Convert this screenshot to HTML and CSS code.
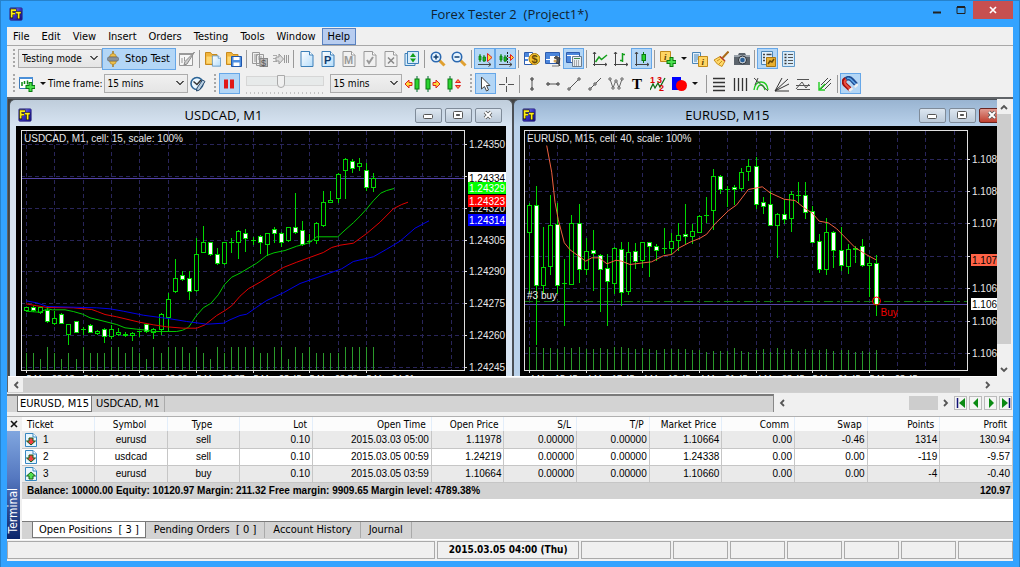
FILE: index.html
```html
<!DOCTYPE html>
<html lang="en">
<head>
    <meta charset="UTF-8">
    <meta name="viewport" content="width=device-width, initial-scale=1.0">
    <title>Forex Tester 2 (Project1*)</title>
    <link rel="stylesheet" href="styles.css">
</head>
<body>
    <!-- shared shapes -->
    <svg class="defs" aria-hidden="true">
        <defs>
            <linearGradient id="gLogo" x1="0" y1="0" x2="1" y2="1"><stop offset="0" stop-color="#a9b4ff"/><stop offset=".5" stop-color="#3a33c8"/><stop offset="1" stop-color="#120a78"/></linearGradient>
            <linearGradient id="gDoc" x1="0" y1="0" x2="1" y2="1"><stop offset="0" stop-color="#fff"/><stop offset="1" stop-color="#b4dcfa"/></linearGradient>
        </defs>
        <symbol id="logo" viewBox="0 0 16 16"><rect x="1" y="1" width="14" height="14" rx="1" fill="url(#gLogo)" stroke="#2a2580"/><path d="M3 13V3.500h5.500M3 7.500h4M8 6.500h6M11 6.500v7" fill="none" stroke="#111" stroke-width="3.400"/><path d="M3 12V3.500h5M3 7.500h4M8 6.500h5.500M11 6.500v6.500" fill="none" stroke="#ffee10" stroke-width="2"/></symbol>
        <symbol id="doc" viewBox="0 0 16 16"><path d="M2 .5h8.500l3.500 3.500v11.500H2z" fill="url(#gDoc)" stroke="#3c7fb8"/><path d="M10.500.5v3.500H14" fill="#fff" stroke="#3c7fb8"/></symbol>
        <symbol id="docgray" viewBox="0 0 16 16"><path d="M2 .5h8.500l3.500 3.500v11.500H2z" fill="#f1f1f1" stroke="#999"/><path d="M10.500.5v3.500H14" fill="#fff" stroke="#999"/></symbol>
        <symbol id="folder" viewBox="0 0 16 16"><path d="M.5 13.500v-12h5l1.500 2h5v10z" fill="#f0b43c" stroke="#c98a1c"/><path d="M1.500 5.500h10v7h-10z" fill="#ffd772"/></symbol>
        <symbol id="candles" viewBox="0 0 16 16"><path d="M3 3v8M7 4v7" stroke="#0a8a12"/><path d="M2 5h2v4H2zM6 6h2.500v4H6z" fill="#18b822" stroke="#0a7a10" stroke-width=".8"/><path d="M1 13.500h13M11.500 11.500l2.500 2-2.500 2" fill="none" stroke="#444"/></symbol>
        <symbol id="axes" viewBox="0 0 16 16"><path d="M2.500 1v14M1 13.500h14M1 3l1.500-2L4 3M13 12l2 1.500-2 1.500" fill="none" stroke="#444"/></symbol>
        <symbol id="candle" viewBox="0 0 6 16"><path d="M3 0v16" stroke="#063"/><rect x="1" y="3" width="4" height="10" fill="#2bd430" stroke="#0a7a10"/></symbol>
        <symbol id="orderdoc" viewBox="0 0 14 16"><path d="M1.500 1.500h7.500l3.500 3.500v9.500h-11z" fill="#e9f6ff" stroke="#3787c0"/><path d="M9 1.500V5h3.500" fill="#fff" stroke="#3787c0"/></symbol>
        <symbol id="sellorder" viewBox="0 0 14 16"><use href="#orderdoc"/><path d="M5 6h4v3h2.500L7 13 2.500 9H5z" fill="#f04040" stroke="#186018"/></symbol>
        <symbol id="buyorder" viewBox="0 0 14 16"><use href="#orderdoc"/><path d="M5 13h4v-3h2.500L7 6l-4.500 4H5z" fill="#50e050" stroke="#186018"/></symbol>
    </svg>

    <div class="window">
        <header class="titlebar">
            <svg class="logo"><use href="#logo"/></svg>
            <h1>Forex Tester 2 &nbsp;(Project1*)</h1>
            <div class="win-buttons">
                <button aria-label="Minimize"><svg width="10" height="10"><path d="M1 7.500h8" stroke="#222" stroke-width="2"/></svg></button>
                <button aria-label="Maximize"><svg width="10" height="10"><path d="M1 2h8v6.500H1z" fill="none" stroke="#222"/><path d="M1 2h8" stroke="#222" stroke-width="2"/></svg></button>
                <button class="close" aria-label="Close"><svg width="8" height="8"><path d="M1 1l6 6M7 1L1 7" stroke="#fff" stroke-width="1.700"/></svg></button>
            </div>
        </header>

        <nav class="menu">
            <button>File</button><button>Edit</button><button>View</button><button>Insert</button><button>Orders</button><button>Testing</button><button>Tools</button><button>Window</button><button class="open">Help</button>
        </nav>

        <div class="toolbar">
            <span class="grip"></span>
            <select class="mode" aria-label="Mode"><option>Testing mode</option></select>
            <button class="stop on">
                <svg class="ico" viewBox="0 0 16 16"><path d="M8 0v16" stroke="#a87a1c" stroke-width="1.500"/><path d="M4.500 6Q5 2.500 8 2.500T11.500 6zM4.500 10q.5 3.500 3.500 3.500t3.500-3.500z" fill="#eec04a" stroke="#a87a1c" stroke-width=".6"/><rect x="2.500" y="6" width="11" height="4" rx="1.500" fill="#8a9299" stroke="#5a6066" stroke-width=".6"/></svg>
                <span>Stop Test</span>
            </button>
            <button class="tool" aria-label="Edit strategy"><svg class="ico" viewBox="0 0 16 16"><path d="M.5 2.500h13v12H.5z" fill="#f6f6f6" stroke="#999"/><path d="M0 3h14" stroke="#999" stroke-width="2"/><path d="M3 7v5M5.500 6v4" stroke="#999"/><path d="M15.500 1L8 13l-3 1 1-3.500z" fill="#ccc" stroke="#888"/></svg></button>
            <span class="sep"></span>
            <button class="tool" aria-label="Open"><svg class="ico" viewBox="0 0 16 16"><use href="#folder"/><use href="#doc" x="6" y="4" width="11" height="12"/></svg></button>
            <button class="tool" aria-label="Save"><svg class="ico" viewBox="0 0 16 16"><use href="#folder"/><path d="M5.500 5.500h10v10h-10z" fill="#4e8fe0" stroke="#1f55a8"/><path d="M7.500 6h6v3h-6zM7.500 11.500h6V15h-6z" fill="#fff"/></svg></button>
            <span class="sep"></span>
            <button class="tool" aria-label="Copy order"><svg class="ico" viewBox="0 0 16 16"><path d="M.5 1.500h7v11h-7zM4.500 3.500h7v11h-7z" fill="#eee" stroke="#999"/><path d="M2 4h4M2 6h2M6 6h4M6 8h3M2 8h2M2 10h2" stroke="#999"/><rect x="8" y="7.500" width="7.500" height="8" fill="#bbb" stroke="#888"/><text x="9" y="15" font-size="9" fill="#555">$</text></svg></button>
            <button class="tool" aria-label="Next tick"><svg class="ico" viewBox="0 0 16 16"><path d="M0 4.500h4M0 7.500h3M0 10.500h4" stroke="#aaa"/><path d="M3 6h3V3l4.500 5L6 13v-3H3z" fill="#ddd" stroke="#999"/><path d="M11.500 4v8M13.500 4v8M15.500 4v8" stroke="#999"/></svg></button>
            <span class="sep"></span>
            <button class="tool" aria-label="New"><svg class="ico"><use href="#doc"/></svg></button>
            <button class="tool" aria-label="Project"><svg class="ico" viewBox="0 0 16 16"><use href="#doc"/><text class="b" x="4" y="13" font-size="11" fill="#123e70">P</text></svg></button>
            <button class="tool" aria-label="Market order"><svg class="ico" viewBox="0 0 16 16"><use href="#docgray"/><text class="b" x="3" y="13" font-size="11" fill="#999">M</text></svg></button>
            <button class="tool" aria-label="Confirm order"><svg class="ico" viewBox="0 0 16 16"><use href="#docgray"/><path d="M5 9l2 3 4-6" fill="none" stroke="#999" stroke-width="2"/></svg></button>
            <button class="tool" aria-label="Delete order"><svg class="ico" viewBox="0 0 16 16"><use href="#docgray"/><path d="M5 6.500l6 6M11 6.500l-6 6" stroke="#888" stroke-width="1.500"/></svg></button>
            <button class="tool" aria-label="Modify order"><svg class="ico" viewBox="0 0 16 16"><path d="M1 2.500h10v12H1z" fill="#d8ecfa" stroke="#3c7fb8"/><path d="M3.500.5h11v12h-11z" fill="#d8ecfa" stroke="#3c7fb8"/><path d="M9 2L12 6H6zM9 11.500L12 7.500H6z" fill="#13a01b"/></svg></button>
            <span class="sep"></span>
            <button class="tool" aria-label="Zoom in"><svg class="ico" viewBox="0 0 16 16"><path d="M9 9l5.500 5.500" stroke="#e0a030" stroke-width="3"/><circle cx="6" cy="6" r="4.700" fill="#e8f5ff" stroke="#2a68b0" stroke-width="1.600"/><path d="M3.500 6h5M6 3.500v5" stroke="#123e70" stroke-width="1.500"/></svg></button>
            <button class="tool" aria-label="Zoom out"><svg class="ico" viewBox="0 0 16 16"><path d="M9 9l5.500 5.500" stroke="#e0a030" stroke-width="3"/><circle cx="6" cy="6" r="4.700" fill="#e8f5ff" stroke="#2a68b0" stroke-width="1.600"/><path d="M3.500 6h5" stroke="#123e70" stroke-width="1.500"/></svg></button>
            <span class="sep"></span>
            <button class="tool on" aria-label="Auto scroll"><svg class="ico" viewBox="0 0 16 16"><use href="#candles"/><path d="M10.500 2.500L15 6.500l-4.500 4z" fill="#ffd83a" stroke="#e02020"/></svg></button>
            <button class="tool on" aria-label="Chart shift"><svg class="ico" viewBox="0 0 16 16"><use href="#candles"/><path d="M9.500 1v12" stroke="#222" stroke-dasharray="2 1"/><path d="M10.500 6.500h2M15.500 6.500L12.500 3.500v6z" fill="#ffd83a" stroke="#e02020"/></svg></button>
            <span class="sep"></span>
            <button class="tool" aria-label="Account"><svg class="ico" viewBox="0 0 16 16"><path d="M.5 1.500h8v12h-8z" fill="#fff" stroke="#2d5cae"/><path d="M1 2h4v4H1zM1 8h3v2H1z" fill="#4b86dc"/><circle cx="10.500" cy="8" r="5.500" fill="#f5c532" stroke="#a87a10"/><text class="b" x="7.500" y="12" font-size="11" fill="#6b4a05">$</text></svg></button>
            <button class="tool" aria-label="Statistics"><svg class="ico" viewBox="0 0 16 16"><path d="M.5 1.500h14v11H.5z" fill="#fff" stroke="#2d5cae"/><path d="M1 2h13v3H1zM1 5h4v7H1z" fill="#4b86dc"/><path d="M1 8.500h6" stroke="#fff"/><path d="M7 15h7v-2l-3-1 1-4-3-1 2-2 4 2-1 6 1 2" fill="#555" stroke="#222" stroke-width=".6"/><circle cx="10" cy="10" r="1.500" fill="#d8a85a"/></svg></button>
            <button class="tool on" aria-label="Terminal"><svg class="ico" viewBox="0 0 16 16"><path d="M.5 1.500h13v10H.5z" fill="#fff" stroke="#2d5cae"/><path d="M1 2h12v2H1zM1 5h4v6H1z" fill="#4b86dc"/><path d="M6.500 5.500h9v10h-9z" fill="#e9eef2" stroke="#6c7c8c"/><path d="M8 7.500h6" stroke="#3b8a48"/><path d="M8 10h6M8 12h6M8 14h6" stroke="#666" stroke-dasharray="1 1"/></svg></button>
            <span class="sep"></span>
            <button class="tool" aria-label="Line chart"><svg class="ico" viewBox="0 0 16 16"><use href="#axes"/><path d="M3.500 11L7 6l2.500 2.500L15 4" fill="none" stroke="#14a01c" stroke-width="1.500"/></svg></button>
            <button class="tool" aria-label="Bar chart"><svg class="ico" viewBox="0 0 16 16"><use href="#axes"/><path d="M9.500 2v9M9.500 3.500H12M9.500 9.500H7" fill="none" stroke="#14a01c" stroke-width="1.500"/></svg></button>
            <button class="tool on" aria-label="Candle chart"><svg class="ico" viewBox="0 0 16 16"><use href="#axes"/><path d="M9.500 1v11" stroke="#0a7a10"/><rect x="8" y="3.500" width="3.500" height="6" fill="#2bd430" stroke="#0a7a10"/></svg></button>
            <span class="sep"></span>
            <button class="tool" aria-label="Add indicator"><svg class="ico" viewBox="0 0 16 16"><path d="M.5.5h10v10H.5z" fill="#ffd564" stroke="#c08a1c"/><text class="i" x="4" y="9" font-size="9" fill="#5a3c00">i</text><path d="M11.500 6v10M6.500 11h10" stroke="#0a7a10" stroke-width="4"/><path d="M11.500 7v8M7.500 11h8" stroke="#4be04f" stroke-width="2"/></svg></button>
            <button class="drop" aria-label="More indicators"></button>
            <button class="tool" aria-label="Indicators"><svg class="ico" viewBox="0 0 16 16"><path d="M.5 1.500h8v11h-8z" fill="#e2f0fb" stroke="#4a86b8"/><path d="M2 4h5M2 6h5M2 8h5M2 10h3" stroke="#4a86b8"/><path d="M6.500 5.500h9v10h-9z" fill="#ffd564" stroke="#c08a1c"/><text class="i" x="9.500" y="14" font-size="9" fill="#5a3c00">i</text></svg></button>
            <button class="tool" aria-label="Clear"><svg class="ico" viewBox="0 0 16 16"><path d="M15.500.5L9.500 7" stroke="#a86a18" stroke-width="2"/><path d="M1 9l6-3.500 5 4.500-3 5.500q-5-1.500-8-6.500z" fill="#ffd86a" stroke="#c8901c"/><path d="M7 5.500l5 4.500" stroke="#b83a2a" stroke-width="1.500"/><path d="M4 10l3-2M6 13l3-3" stroke="#c8901c"/></svg></button>
            <button class="tool" aria-label="Screenshot"><svg class="ico" viewBox="0 0 16 16"><path d="M0 4h4l1-2h6l1 2h4v10H0z" fill="#5c646c"/><path d="M0 4h16v2H0z" fill="#9aa2aa"/><circle cx="8.500" cy="9" r="4" fill="#c8d0d8" stroke="#2a3036"/><circle cx="8.500" cy="9" r="2.300" fill="#2a6098"/></svg></button>
            <span class="sep"></span>
            <button class="tool on" aria-label="Order list"><svg class="ico" viewBox="0 0 16 16"><path d="M1.500.5h11v13h-11z" fill="#e2f0fb" stroke="#4a86b8"/><path d="M3 3.500h2M3 6.500h2M3 9.500h2M6.500 3.500h5" stroke="#444" stroke-width="1.500"/><path d="M6.500 6.500h9v9h-9z" fill="#e8b030" stroke="#a87410"/><path d="M8 13l2-3 2 1 2-3" fill="none" stroke="#6b4a05" stroke-width="1.500"/></svg></button>
            <button class="tool" aria-label="Notes"><svg class="ico" viewBox="0 0 16 16"><path d="M1.500.5h12v15h-12z" fill="#d9ecfa" stroke="#5f98c8"/><path d="M3.500 3.500h2M3.500 6.500h2M3.500 9.500h2M3.500 12.500h2" stroke="#333" stroke-width="1.500"/><path d="M7 3.500h5M7 6.500h5M7 9.500h5M7 12.500h5" stroke="#555"/></svg></button>
        </div>

        <div class="toolbar second">
            <span class="grip tight"></span>
            <button class="tool" aria-label="New chart"><svg class="ico" viewBox="0 0 16 16"><path d="M.5 1.500h13v11H.5z" fill="#fff" stroke="#3b78b8"/><path d="M0 2h14" stroke="#4b90d8" stroke-width="2"/><path d="M3 6v4M5.500 5v3M8.500 4.500v4" stroke="#0a8a12" stroke-width="1.500"/><path d="M11.500 6v10M6.500 11h10" stroke="#0a7a10" stroke-width="4"/><path d="M11.500 7v8M7.500 11h8" stroke="#4be04f" stroke-width="2"/></svg></button>
            <button class="drop" aria-label="More charts"></button>
            <label for="timeframe">Time frame:</label>
            <select class="frame" id="timeframe"><option>15 mins</option></select>
            <button class="tool" aria-label="Set time"><svg class="ico" viewBox="0 0 16 16"><circle cx="7" cy="7.500" r="6" fill="#e9f6ff" stroke="#2c6496" stroke-width="1.600"/><path d="M3.500 5.500L7 8.500 11 4" fill="none" stroke="#333" stroke-width="1.500"/><path d="M15 5.500L9.500 14l-3 1 .5-3L12.500 4z" fill="#b9cfe2" stroke="#26486a"/></svg></button>
            <span class="grip gap-left"></span>
            <button class="tool on" aria-label="Pause"><svg class="ico" viewBox="0 0 16 16"><path d="M3 3.500h4v9H3zM9 3.500h4v9H9z" fill="#e01818"/></svg></button>
            <input class="speed" type="range" min="0" max="20" value="9" aria-label="Speed">
            <select class="step" aria-label="Step"><option>15 mins</option></select>
            <button class="tool" aria-label="Step back"><svg class="ico" viewBox="0 0 16 16"><path d="M1 8l4-4v2.500h3v3H5V12z" fill="#ffd83a" stroke="#e02020"/><use href="#candle" x="10" width="6" height="16"/></svg></button>
            <button class="tool" aria-label="Step forward"><svg class="ico" viewBox="0 0 16 16"><path d="M15 8l-4-4v2.500H8v3h3V12z" fill="#ffd83a" stroke="#e02020"/><use href="#candle" width="6" height="16"/></svg></button>
            <button class="tool" aria-label="Step size"><svg class="ico" viewBox="0 0 16 16"><use href="#candle" x="1" width="6" height="16"/><path d="M9.500 6.500h5L12 3.500zM9.500 9.500h5l-2.500 3z" fill="#ff9a3a" stroke="#e02020"/></svg></button>
            <span class="grip gap-left"></span>
            <button class="tool on" aria-label="Pointer"><svg class="ico" viewBox="0 0 16 16"><path d="M4.500 1v12l3-2.500 2 4.500 2-1-2-4.500h3.500z" fill="#fff" stroke="#444"/></svg></button>
            <button class="tool" aria-label="Crosshair"><svg class="ico" viewBox="0 0 16 16"><path d="M8.500 1v6M8.500 10v6M1 8.500h6M10 8.500h6" stroke="#555"/></svg></button>
            <span class="sep"></span>
            <button class="tool" aria-label="Vertical line"><svg class="ico" viewBox="0 0 16 16"><path d="M8 3v10" stroke="#555"/><path d="M7 2h2v2H7zM7 12h2v2H7z" fill="#fff" stroke="#333"/></svg></button>
            <button class="tool" aria-label="Horizontal line"><svg class="ico" viewBox="0 0 16 16"><path d="M3 8h10" stroke="#555"/><path d="M2 7h2v2H2zM12 7h2v2h-2z" fill="#fff" stroke="#333"/></svg></button>
            <button class="tool" aria-label="Trend line"><svg class="ico" viewBox="0 0 16 16"><path d="M3 13L13 3" stroke="#555"/><path d="M2 12h2v2H2zM12 2h2v2h-2z" fill="#fff" stroke="#555"/></svg></button>
            <button class="tool" aria-label="Ray"><svg class="ico" viewBox="0 0 16 16"><path d="M3 13L14 2" stroke="#555"/><path d="M2 12h2v2H2zM7 7h2v2H7z" fill="#fff" stroke="#555"/></svg></button>
            <button class="tool" aria-label="Polyline"><svg class="ico" viewBox="0 0 16 16"><path d="M2 3l3 9 3-8 3 8 3-9" fill="none" stroke="#666"/><path d="M1 2h2v2H1zM4 11h2v2H4zM7 4h2v2H7zM10 11h2v2h-2zM13 2h2v2h-2z" fill="#fff" stroke="#666"/></svg></button>
            <button class="tool" aria-label="Text"><svg class="ico" viewBox="0 0 16 16"><text class="serif" x="3" y="13" font-size="15">T</text></svg></button>
            <button class="tool" aria-label="Waves"><svg class="ico" viewBox="0 0 16 16"><path d="M0 14l3-6 2 4 3-5 2 4 5-9" fill="none" stroke="#0a6a12" stroke-width="1.300"/><text class="b" x="0" y="7" font-size="9" fill="#d00">1</text><text class="b" x="7" y="7" font-size="9" fill="#d00">3</text><text class="b" x="9" y="15" font-size="9" fill="#d00">2</text></svg></button>
            <button class="tool" aria-label="Shapes"><svg class="ico" viewBox="0 0 16 16"><path d="M1 1h9v13H1z" fill="#00f"/><circle cx="10.500" cy="9.500" r="5.500" fill="#f00"/></svg></button>
            <button class="drop" aria-label="More shapes"></button>
            <span class="sep"></span>
            <button class="tool" aria-label="Fibonacci retracement"><svg class="ico" viewBox="0 0 16 16"><path d="M2 2.500h12M2 6.500h12M2 10.500h12M2 14.500h12" stroke="#333" stroke-width="1.300"/></svg></button>
            <button class="tool" aria-label="Time zones"><svg class="ico" viewBox="0 0 16 16"><path d="M2.500 2v13M6.500 2v13M10.500 2v13M14.500 2v13" stroke="#333" stroke-width="1.300"/></svg></button>
            <button class="tool" aria-label="Fibonacci arcs"><svg class="ico" viewBox="0 0 16 16"><path d="M1 14Q2 6 8 6t7 8M4 14q1-5 4-5t4 5" fill="none" stroke="#2c2" stroke-width="1.400"/><path d="M1 2l14 13M5 2L2 9" stroke="#444"/></svg></button>
            <button class="tool" aria-label="Fibonacci fan"><svg class="ico" viewBox="0 0 16 16"><path d="M1 15L8 2M1 15L14 3M1 15l14-7M1 15h14" stroke="#333"/></svg></button>
            <button class="tool" aria-label="Fibonacci expansion"><svg class="ico" viewBox="0 0 16 16"><path d="M2 3.500h12M1 9.500h14M2 13.500h13M1 13l6-7 4 6 3-4" fill="none" stroke="#555"/></svg></button>
            <button class="tool" aria-label="Channel"><svg class="ico" viewBox="0 0 16 16"><path d="M5 9L12 2M5 13L15 3M9 13l6-6" stroke="#444"/><path d="M3 6v8h6M3 14L9 8" fill="none" stroke="#2c2" stroke-width="1.400"/></svg></button>
            <span class="sep"></span>
            <button class="tool on" aria-label="Magnet"><svg class="ico" viewBox="0 0 16 16"><path d="M9 14L3.500 9Q0 5 4 3" fill="none" stroke="#a01010" stroke-width="4.500"/><path d="M4 3q3-2 6 1l4.500 5" fill="none" stroke="#1e4a90" stroke-width="4.500"/><path d="M8.500 13.500L3.500 8.500Q1.500 5 4 3.500" fill="none" stroke="#ee5040" stroke-width="2"/><path d="M5 2.500q3-1 5 2l4 4" fill="none" stroke="#62a8ea" stroke-width="1.500"/><path d="M7 15l3.500-3M12.500 11l3.500-3" stroke="#eee" stroke-width="2.500"/></svg></button>
        </div>

        <main class="mdi">
            <div class="charts">
                <section class="child">
                    <div class="child-title">
                        <svg class="logo"><use href="#logo"/></svg>
                        <h2>USDCAD, M1</h2>
                        <button aria-label="Minimize"><svg width="12" height="10"><rect x="1.500" y="4.500" width="9" height="4" rx="1" fill="#fff" stroke="#555"/></svg></button>
                        <button aria-label="Restore"><svg width="12" height="10"><rect x="1.500" y="1.500" width="9" height="7" rx="1" fill="#fff" stroke="#555"/><path d="M4.500 4.500h3v1h-3z" stroke="#555"/></svg></button>
                        <button aria-label="Close"><svg width="12" height="10"><path d="M3 2l6 6M9 2L3 8" stroke="#555" stroke-width="3.500"/><path d="M3 2l6 6M9 2L3 8" stroke="#fff" stroke-width="2"/></svg></button>
                    </div>
                    <svg class="chart" id="usdcad" role="img" aria-label="USDCAD, M1"></svg>
                </section>
                <section class="child active">
                    <div class="child-title">
                        <svg class="logo"><use href="#logo"/></svg>
                        <h2>EURUSD, M15</h2>
                        <button aria-label="Minimize"><svg width="12" height="10"><rect x="1.500" y="4.500" width="9" height="4" rx="1" fill="#fff" stroke="#555"/></svg></button>
                        <button aria-label="Restore"><svg width="12" height="10"><rect x="1.500" y="1.500" width="9" height="7" rx="1" fill="#fff" stroke="#555"/><path d="M4.500 4.500h3v1h-3z" stroke="#555"/></svg></button>
                        <button class="red" aria-label="Close"><svg width="12" height="10"><path d="M3 2l6 6M9 2L3 8" stroke="#555" stroke-width="3.500"/><path d="M3 2l6 6M9 2L3 8" stroke="#fff" stroke-width="2"/></svg></button>
                    </div>
                    <svg class="chart" id="eurusd" role="img" aria-label="EURUSD, M15"></svg>
                </section>
            </div>
            <div class="vscroll">
                <button aria-label="Scroll up"><svg width="8" height="8"><path d="M1 6l3-3 3 3" fill="none" stroke="#555" stroke-width="1.800"/></svg></button>
                <span class="thumb"></span>
                <button aria-label="Scroll down"><svg width="8" height="8"><path d="M1 2l3 3 3-3" fill="none" stroke="#555" stroke-width="1.800"/></svg></button>
            </div>
            <div class="hscroll">
                <button aria-label="Scroll left"><svg width="8" height="8"><path d="M6 1L3 4l3 3" fill="none" stroke="#555" stroke-width="1.800"/></svg></button>
                <span class="thumb"></span>
                <button aria-label="Scroll right"><svg width="8" height="8"><path d="M2 1l3 3-3 3" fill="none" stroke="#555" stroke-width="1.800"/></svg></button>
            </div>
        </main>

        <div class="sheets">
            <div class="tabs">
                <button class="tab current">EURUSD, M15</button>
                <button class="tab">USDCAD, M1</button>
            </div>
            <div class="sheet-scroll">
                <button aria-label="Scroll left"><svg width="8" height="8"><path d="M6 1L3 4l3 3" fill="none" stroke="#555" stroke-width="1.800"/></svg></button>
                <span class="thumb"></span>
                <button aria-label="Scroll right"><svg width="8" height="8"><path d="M2 1l3 3-3 3" fill="none" stroke="#555" stroke-width="1.800"/></svg></button>
            </div>
            <div class="sheet-nav">
                <button aria-label="First"><svg width="10" height="10"><path d="M1.500 0v10" stroke="#117" stroke-width="1.500"/><path d="M9 0v10L3 5z" fill="#0a8a12"/></svg></button>
                <button aria-label="Previous"><svg width="10" height="10"><path d="M7 0v10L2 5z" fill="#0a8a12"/></svg></button>
                <button aria-label="Next"><svg width="10" height="10"><path d="M3 0v10l5-5z" fill="#0a8a12"/></svg></button>
                <button aria-label="Last"><svg width="10" height="10"><path d="M8.500 0v10" stroke="#117" stroke-width="1.500"/><path d="M1 0v10l6-5z" fill="#0a8a12"/></svg></button>
            </div>
        </div>

        <section class="terminal">
            <div class="side">
                <button aria-label="Close terminal"><svg width="8" height="8"><path d="M1 1l6 6M7 1L1 7" stroke="#111" stroke-width="1.600"/></svg></button>
                <span>Terminal</span>
            </div>
            <div class="terminal-body">
                <table>
                    <thead>
                        <tr><th class="left">Ticket</th><th class="mid">Symbol</th><th class="mid">Type</th><th>Lot</th><th class="time">Open Time</th><th>Open Price</th><th>S/L</th><th>T/P</th><th>Market Price</th><th>Comm</th><th>Swap</th><th>Points</th><th>Profit</th></tr>
                    </thead>
                    <tbody>
                        <tr><td class="ticket"><svg><use href="#sellorder"/></svg>1</td><td class="mid">eurusd</td><td class="mid">sell</td><td>0.10</td><td>2015.03.03 05:00</td><td>1.11978</td><td>0.00000</td><td>0.00000</td><td>1.10664</td><td>0.00</td><td>-0.46</td><td>1314</td><td>130.94</td></tr>
                        <tr><td class="ticket"><svg><use href="#sellorder"/></svg>2</td><td class="mid">usdcad</td><td class="mid">sell</td><td>0.10</td><td>2015.03.05 00:59</td><td>1.24219</td><td>0.00000</td><td>0.00000</td><td>1.24338</td><td>0.00</td><td>0.00</td><td>-119</td><td>-9.57</td></tr>
                        <tr><td class="ticket"><svg><use href="#buyorder"/></svg>3</td><td class="mid">eurusd</td><td class="mid">buy</td><td>0.10</td><td>2015.03.05 03:59</td><td>1.10664</td><td>0.00000</td><td>0.00000</td><td>1.10660</td><td>0.00</td><td>0.00</td><td>-4</td><td>-0.40</td></tr>
                    </tbody>
                    <tfoot>
                        <tr><td class="left" colspan="12">Balance: 10000.00 Equity: 10120.97 Margin: 211.32 Free margin: 9909.65 Margin level: 4789.38%</td><td>120.97</td></tr>
                    </tfoot>
                </table>
                <div class="tabs bottom">
                    <button class="tab current">Open Positions &nbsp;[ 3 ]</button>
                    <button class="tab">Pending Orders &nbsp;[ 0 ]</button>
                    <button class="tab">Account History</button>
                    <button class="tab">Journal</button>
                </div>
            </div>
        </section>

        <footer class="status">
            <span class="wide"></span><span class="clock">2015.03.05 04:00 (Thu)</span><span class="medium"></span><span></span><span></span><span></span><span></span><span></span><span></span>
        </footer>
    </div>
    <script src="charts.js"></script>
</body>
</html>
```
FILE: styles.css
```css
* {
    margin: 0;
    padding: 0;
    box-sizing: border-box;
}

body {
    font-family: 'DejaVu Sans Condensed', 'Noto Sans', sans-serif;
    font-size: 11px;
    line-height: 14px;
    color: #000;
}

button, select, input {
    font: inherit;
    color: inherit;
    background: none;
    border: none;
}

svg {
    display: block;
    flex-shrink: 0;
}

.defs {
    position: absolute;
    width: 0;
    height: 0;
}

.window {
    display: flex;
    flex-direction: column;
    min-height: 100vh;
    background: #33a3ff;
    border: 1px solid #2682cc;
    padding: 0 6px 6px;
}

/* title bar */
.titlebar {
    display: flex;
    align-items: center;
    height: 26px;
}

.titlebar .logo {
    margin-left: 2px;
}

.logo {
    width: 14px;
    height: 14px;
}

.titlebar h1 {
    flex: 1;
    padding-left: 71px;
    text-align: center;
    font: 13px/18px 'Open Sans', 'Noto Sans', sans-serif;
    color: #10222f;
}

.win-buttons {
    display: flex;
    align-self: flex-start;
}

.win-buttons button {
    display: flex;
    align-items: center;
    justify-content: center;
    width: 24px;
    height: 18px;
}

.win-buttons .close {
    width: 40px;
    background: #c75050;
}

/* menu */
.menu {
    display: flex;
    height: 19px;
    padding-top: 1px;
    background: #f0f0f0;
    border-bottom: 1px solid #a8a8a8;
}

.menu button {
    padding: 0 5px;
    border: 1px solid transparent;
    height: 17px;
}

.menu .open {
    background: #b8cdf0;
    border-color: #5a82c0;
}

/* toolbars */
.toolbar {
    display: flex;
    align-items: center;
    height: 25px;
    padding-left: 6px;
    background: #f0f0f0;
    overflow: hidden;
    font-size: 10px;
}

.toolbar.second {
    height: 26px;
    padding-bottom: 1px;
}

.toolbar > * {
    flex-shrink: 0;
}

.grip {
    width: 2px;
    height: 20px;
    margin-right: 3px;
    background: repeating-linear-gradient(#a8a8a8 0 2px, transparent 2px 4px);
}

.grip.tight {
    margin-right: 1px;
}

.gap-left {
    margin-left: 5px;
}

.tool {
    display: flex;
    align-items: center;
    justify-content: center;
    width: 21px;
    height: 21px;
}

.on {
    background: #b3d6f6;
    border: 1px solid #66a7e8;
}

.ico {
    width: 16px;
    height: 16px;
}

.ico text {
    font-family: 'Liberation Sans', sans-serif;
}

.ico .b {
    font-weight: bold;
}

.ico .i, .ico .serif {
    font-family: 'Liberation Serif', serif;
    font-weight: bold;
}

.ico .i {
    font-style: italic;
}

.sep {
    width: 1px;
    height: 18px;
    margin: 0 2px;
    background: #999;
}

.drop {
    width: 11px;
    height: 20px;
    display: flex;
    align-items: center;
    justify-content: center;
}

.drop + .sep {
    margin-left: 5px;
}

.drop::after {
    content: "";
    border: 3px solid transparent;
    border-top-color: #111;
    border-bottom: 0;
}

.stop {
    display: flex;
    align-items: center;
    gap: 4px;
    width: 74px;
    height: 22px;
    padding-left: 2px;
    font-size: 11px;
    white-space: nowrap;
}

select {
    height: 19px;
    padding: 0 3px;
    border: 1px solid #acacac;
    appearance: none;
}

/* chevron cut from two gradients */
.mode, .frame, .step {
    background:
        linear-gradient(45deg, transparent 50%, #555 50% 70%, transparent 70%) right 7px top 6px / 4px 5px no-repeat,
        linear-gradient(-45deg, transparent 50%, #555 50% 70%, transparent 70%) right 3px top 6px / 4px 5px no-repeat,
        linear-gradient(#f0f0f0, #e5e5e5);
}

.mode, .frame {
    width: 84px;
}

.step {
    width: 72px;
}

.toolbar label {
    margin-right: 1px;
}

.speed {
    width: 78px;
    height: 20px;
    margin: 0 6px;
    appearance: none;
    background: repeating-linear-gradient(90deg, #c4c4c4 0 1px, transparent 1px 4px) 0 18px / 100% 2px no-repeat;
}

.speed::-webkit-slider-runnable-track {
    height: 10px;
    margin-bottom: 6px;
    background: #e7eaea;
    border: 1px solid #d6d6d6;
}

.speed::-webkit-slider-thumb {
    appearance: none;
    width: 8px;
    height: 13px;
    margin-top: -2px;
    background: #f0f0f0;
    border: 1px solid #aaa;
    border-radius: 0 0 4px 4px;
}

/* chart windows */
.mdi {
    flex: 1;
    display: grid;
    grid-template-columns: minmax(0, 1fr) 16px;
    grid-template-rows: minmax(278px, 1fr) 15px;
    border-top: 2px solid #606468;
    border-left: 1px solid #606468;
    background: #f0f0f0;
}

.charts {
    display: flex;
    overflow: hidden;
    padding-left: 1px;
    border-bottom: 1px solid #fff;
    background: #444;
}

.child {
    flex: 0 0 51%;
    display: flex;
    flex-direction: column;
    padding: 0 6px;
    border: 1px solid #4a4f55;
    border-bottom: 0;
    border-radius: 6px 6px 0 0;
    background: linear-gradient(#bfcddb, #d7e4f2 26px);
}

.child.active {
    background: linear-gradient(#99b4d1, #b9d1ea 26px);
}

.child-title {
    display: flex;
    align-items: center;
    gap: 3px;
    height: 26px;
    padding: 4px 4px 0 2px;
}

.child-title h2 {
    flex: 1;
    text-align: center;
    font: 13px/18px 'Open Sans', 'Noto Sans', sans-serif;
}

.child-title button {
    display: flex;
    align-items: center;
    justify-content: center;
    width: 27px;
    height: 15px;
    border: 1px solid #7f8b99;
    border-radius: 2px;
    background: linear-gradient(#dce6f0, #bccad9);
}

.child-title .red {
    background: linear-gradient(#e09a90, #c04030);
    border-color: #6b2520;
}

.chart {
    flex: 1;
    width: 100%;
    height: 0;
    min-height: 250px;
    background: #000;
    font: 10px 'Liberation Sans', Arial, sans-serif;
    fill: #e8e8e8;
    overflow: hidden;
}

.chart .dates {
    font-size: 9px;
}

.chart path, .chart polyline {
    fill: none;
    shape-rendering: crispEdges;
}

.chart polyline {
    stroke-width: 1;
    shape-rendering: auto;
}

.chart .grid {
    stroke: #29255a;
    stroke-dasharray: 4 3;
}

.chart .frame-line {
    stroke: #e0e0e0;
}

.chart .volume {
    stroke: #2a9a2a;
}

.chart .price-line {
    stroke: #5544a8;
}

.chart .order-line {
    stroke: #107a10;
    stroke-dasharray: 9 4 3 4;
}

.chart rect {
    shape-rendering: crispEdges;
}

.chart .up {
    fill: #000;
    stroke: #00d800;
}

.chart .down {
    fill: #fff;
    stroke: #00d800;
}

.chart .wick {
    stroke: #00d800;
}

/* scrollbars */
.vscroll, .hscroll, .sheet-scroll {
    display: flex;
    align-items: center;
    background: #f0f0f0;
}

.vscroll {
    flex-direction: column;
    padding-right: 2px;
}

.vscroll button, .hscroll button, .sheet-scroll button {
    display: flex;
    align-items: center;
    justify-content: center;
    flex: 0 0 15px;
    height: 14px;
}

.vscroll .thumb {
    flex: 1;
    width: 100%;
    margin-bottom: 18px;
    background: #cdcdcd;
}

.hscroll {
    padding-right: 2px;
}

.hscroll .thumb {
    flex: 1;
    height: 14px;
    margin-right: 20px;
    background: #cdcdcd;
}

/* chart tabs */
.sheets {
    display: flex;
    height: 24px;
    padding: 1px 0 4px;
    background: #f0f0f0;
    border-top: 1px solid #d0d0d0;
    gap: 1px;
}

.tabs {
    display: flex;
    background: #d3d3d3;
    border-top: 2px solid #7a7a7a;
    padding-left: 10px;
}

.tab {
    height: 16px;
    padding: 0 4px;
    border-right: 1px solid #aaa;
    white-space: nowrap;
}

.tab.current {
    padding: 0 2px;
    background: #fff;
    border: 1px solid #777;
    border-top: 0;
}

.sheets .tabs {
    flex: 767;
    border-right: 1px solid #888;
}

.sheet-scroll {
    flex: 181;
}

.sheet-scroll .thumb {
    flex: 0 0 29px;
    height: 14px;
    margin-left: auto;
    background: #cdcdcd;
}

.sheet-nav {
    display: flex;
    align-items: center;
    gap: 2px;
    padding-right: 1px;
}

.sheet-nav button {
    display: flex;
    align-items: center;
    justify-content: center;
    width: 13px;
    height: 14px;
    border: 1px solid #bbb;
    background: #f4f4f4;
}

/* terminal */
.terminal {
    display: flex;
    height: 123px;
    background: #f0f0f0;
    border-top: 1px solid #b0b0b0;
}

.side {
    display: flex;
    flex-direction: column;
    align-items: center;
    justify-content: space-between;
    width: 13px;
    margin-right: 2px;
    background: linear-gradient(#8db4e8, #5578c0 50%, #0a246a);
}

.side button {
    display: flex;
    align-items: center;
    justify-content: center;
    width: 13px;
    height: 14px;
    background: #f0f0f0;
}

.side span {
    writing-mode: vertical-rl;
    transform: rotate(180deg);
    padding-top: 6px;
    font-size: 12px;
    line-height: 13px;
    color: #fff;
}

.terminal-body {
    flex: 1;
    display: flex;
    flex-direction: column;
    justify-content: space-between;
    min-width: 0;
    background: #fff;
}

table {
    width: 100%;
    table-layout: fixed;
    border-collapse: collapse;
    font-family: 'Liberation Sans', Arial, sans-serif;
    font-size: 10px;
}

th, td {
    text-align: right;
    height: 17px;
    padding: 0 2px;
    line-height: 13px;
    white-space: nowrap;
}

th {
    height: 14px;
    padding-right: 5px;
    border-right: 1px solid #e3eefa;
    font-family: 'DejaVu Sans Condensed', 'Noto Sans', sans-serif;
    font-weight: normal;
    background: #fcfcfc;
}

th.time {
    width: 12%;
}

tbody td {
    border-right: 1px solid #c6c6c6;
    border-bottom: 1px solid #c6c6c6;
}

tbody tr:nth-child(odd) {
    background: #eaeaea;
}

th.left, td.left {
    padding-left: 5px;
    text-align: left;
}

th.mid, td.mid {
    text-align: center;
}

td.ticket {
    text-align: left;
}

.ticket svg {
    display: inline-block;
    vertical-align: middle;
    width: 14px;
    height: 16px;
    margin: -2px 5px -2px 0;
}

tfoot td {
    font-weight: bold;
    background: #d2d2d2;
}

.tabs.bottom {
    height: 18px;
    border-top-width: 1px;
}

.bottom .tab {
    padding: 0 8px;
}

.bottom .tab.current {
    padding: 0 6px;
}

/* status bar */
.status {
    display: flex;
    gap: 2px;
    height: 22px;
    padding: 1px 0;
    background: #f0f0f0;
    border-top: 1px solid #fff;
}

.status span {
    flex: 55;
    height: 18px;
    border: 1px solid #aaa;
}

.status .wide {
    flex: 442;
}

.status .clock {
    flex: 146;
    text-align: center;
    font: bold 10px/16px 'DejaVu Sans Condensed', 'Noto Sans', sans-serif;
}

.status .medium {
    flex: 91;
}
```
FILE: charts.js
```js
// vertical data is measured down from the pane top, three units to a pixel
const UNIT = 3;
const px = v => Math.round(v / UNIT) - 1;

// [high, top, bottom, low, up or down]
const usdcad = {
    title: 'USDCAD, M1, cell: 15, scale: 100%',
    left: 5, right: 448, first: 10,
    rows: [58, 154, 250, 346, 439, 535, 630, 727],
    labels: ['1.24350', '', '1.24320', '1.24305', '1.24290', '1.24275', '1.24260', '1.24245'],
    price: 160,
    tags: [[160, '1.24334', '#fff', '#000'], [189, '1.24329', '#0f0', '#fff'], [229, '1.24323', '#f00', '#fff'], [285, '1.24314', '#00f', '#fff']],
    candles: [
        [545,547,556,558,1],[542,546,556,558,0],[546,547,561,563,1],[542,556,588,592,0],[558,580,593,596,1],[565,568,593,595,0],
        [597,598,626,658,1],[587,589,620,622,0],[607,612,614,626,1],[597,599,620,622,0],[614,619,625,627,1],[610,613,632,650,0],
        [600,612,632,640,1],[610,620,626,630,1],[620,626,631,633,0],[622,625,631,644,1],[618,619,621,632,1],[596,598,619,621,0],
        [608,612,620,640,1],[565,567,612,626,1],[505,523,575,618,1],[403,460,499,500,1],[438,451,462,465,0],[438,460,499,522,0],
        [340,388,494,497,1],[303,352,380,382,1],[350,352,388,390,0],[370,388,415,418,0],[350,352,415,417,1],[340,350,352,380,1],
        [315,319,352,398,1],[313,325,339,377,0],[335,345,347,358,1],[331,333,351,383,0],[323,325,358,390,1],[306,313,325,350,0],
        [320,325,352,363,0],[306,307,346,347,1],[205,307,320,323,0],[287,315,358,360,0],[326,347,349,355,1],[291,293,346,354,1],
        [198,230,301,303,1],[198,224,230,232,1],[144,147,219,230,1],[99,101,134,220,1],[101,109,129,140,0],[98,115,122,134,1],
        [113,134,187,195,0],[143,160,187,198,1]
    ],
    // bar tops: s short, m medium, l long
    volume: 'mmslmsmslmmmllmlmslmlllmlmslmllllmmllslmlmmmmlllll'.split('').map(c => ({ s: 702, m: 683, l: 667 })[c]),
    shift: -6,
    lines: [
        ['#00c800', '48,557 70,559 90,560 112,550 127,553 165,553 190,558 218,566 240,577 285,588 320,597 345,607 380,611 410,614 430,618 500,618 518,614 536,605 558,572 580,547 603,533 625,508 643,478 665,455 690,443 740,413 770,390 792,382 825,375 860,362 898,352 920,334 983,334 1008,311 1030,292 1050,272 1070,250 1090,226 1112,203 1130,195 1152,189'],
        ['#e00000', '48,535 80,541 112,546 190,547 245,552 262,558 285,567 320,574 388,590 430,598 470,604 520,608 560,608 585,598 620,570 645,555 665,541 690,512 715,490 750,470 820,426 860,410 940,381 965,366 990,359 1030,353 1070,324 1110,290 1150,250 1175,237 1194,230'],
        ['#0000e8', '48,526 80,532 112,543 260,547 300,550 340,557 400,569 480,580 530,588 590,596 640,593 660,583 690,570 710,566 740,545 770,525 820,502 870,474 930,453 995,430 1030,408 1090,394 1130,371 1170,347 1215,308 1257,286']
    ],
    dates: ['5 Mar 03:13', '5 Mar 03:21', '5 Mar 03:29', '5 Mar 03:37', '5 Mar 03:45', '5 Mar 03:53', '5 Mar 04:01']
};

const eurusd = {
    title: 'EURUSD, M15, cell: 40, scale: 100%',
    left: 4, right: 447, first: 9,
    rows: [103, 199, 295, 394, 490, 588, 684],
    labels: ['1.10850', '1.10810', '1.10770', '', '1.10690', '1.10650', '1.10610'],
    price: 538,
    order: 529,
    dayBreak: 34,
    tags: [[404, '1.10713', '#ff6347', '#000'], [537, '1.10660', '#fff', '#000']],
    candles: [
        [235,240,320,505,1],[183,241,479,656,0],[306,425,479,505,1],[210,300,424,446,1],[234,298,479,504,0],[401,473,476,600,1],
        [270,295,476,478,1],[237,295,431,470,0],[340,378,431,448,1],[316,374,384,496,0],[387,389,431,557,0],[386,428,469,600,0],
        [365,370,475,504,1],[350,373,500,540,0],[350,380,499,507,1],[355,378,407,430,0],[350,352,405,427,1],[350,352,364,452,0],
        [356,364,376,405,0],[308,370,372,385,1],[324,348,368,386,1],[294,331,344,376,1],[236,327,334,355,0],[298,319,334,355,1],
        [270,273,320,322,1],[217,271,274,290,1],[132,154,254,312,1],[150,153,192,203,0],[183,191,194,244,1],[181,186,193,238,0],
        [130,141,190,194,1],[101,123,139,164,1],[97,123,236,249,0],[215,231,242,265,0],[198,237,299,300,0],[264,266,299,395,1],
        [222,266,281,295,0],[199,208,278,317,1],[172,209,212,230,1],[170,211,260,278,0],[244,259,350,352,0],[327,349,431,440,0],
        [279,322,431,448,1],[318,321,376,425,0],[305,376,421,436,0],[358,372,423,443,1],[362,368,373,412,1],[341,364,421,423,0],
        [395,415,421,513,1],[391,415,537,571,0]
    ],
    volume: [667,667,670,670,672,667,669,667,672,672,669,672,667,667,669,672,669,672,675,672,672,672,672,675,675,680,677,678,677,670,678,680,675,672,680,669,675,672,678,673,676,674,672,678,675,676,680,678,681,675],
    shift: -5,
    lines: [['#f06040', '95,60 110,140 120,230 130,283 148,352 165,373 190,391 212,407 230,397 252,397 276,415 303,404 320,407 345,417 410,409 445,391 470,387 493,367 525,350 555,338 575,326 600,295 640,256 665,238 700,192 742,184 765,202 807,221 840,225 870,249 892,263 913,287 940,292 965,310 1020,366 1055,388 1083,403']],
    dates: ['4 Mar 15:45', '4 Mar 17:45', '4 Mar 19:45', '4 Mar 21:45', '4 Mar 23:45', '5 Mar 01:45', '5 Mar 03:45']
};

function drawChart(id, c) {
    const top = 5, bottom = 244, step = 7.08;
    const x = i => Math.round(c.first + i * step) + 0.5;
    const line = (cls, d) => `<path class="${cls}" d="${d}"/>`;
    let out = '';

    // grid
    c.rows.forEach(r => out += line('grid', `M${c.left} ${px(r)}.5H${c.right}`));
    for (let i = 0; x(i) < c.right; i += 4) out += line('grid', `M${x(i)} ${top}V${bottom}`);
    if (c.dayBreak) out += line('grid', `M${x(c.dayBreak)} ${top}V${bottom}`);

    c.volume.forEach((v, i) => out += line('volume', `M${x(i)} ${px(v)}V${bottom}`));
    out += line('price-line', `M${c.left} ${px(c.price)}.5H${c.right}`);
    if (c.order) out += line('order-line', `M${c.left} ${px(c.order)}.5H${c.right}`);

    c.candles.forEach(([high, t, b, low, up], i) => {
        out += line('wick', `M${x(i)} ${px(high)}V${px(low) + 1}`);
        if (b - t < 4) {
            out += line('wick', `M${x(i) - 2.5} ${px(t)}.5h5`);
        } else {
            out += `<rect class="${up ? 'up' : 'down'}" x="${x(i) - 2}" y="${px(t)}.5" width="4" height="${px(b) - px(t)}"/>`;
        }
    });

    c.lines.forEach(([color, pts]) => {
        const scaled = pts.split(' ').map(p => {
            const [a, b] = p.split(',');
            return `${(a / UNIT + c.shift).toFixed(1)},${(b / UNIT - 0.5).toFixed(1)}`;
        }).join(' ');
        out += `<polyline points="${scaled}" stroke="${color}"/>`;
    });

    // frame, price axis and dates
    out += line('frame-line', `M${c.left}.5 ${top - 1}.5H${c.right}.5V${bottom}.5H${c.left}.5z`);
    c.rows.forEach((r, i) => {
        out += line('frame-line', `M${c.right} ${px(r)}.5h3`);
        out += `<text x="${c.right + 5}" y="${px(r) + 4}">${c.labels[i]}</text>`;
    });
    c.tags.forEach(([y, text, bg, fg]) => {
        out += `<rect x="${c.right + 4}" y="${px(y) - 6}" width="60" height="12" fill="${bg}"/>`;
        out += `<text x="${c.right + 5}" y="${px(y) + 4}" fill="${fg}">${text}</text>`;
    });
    c.dates.forEach((d, i) => {
        out += line('frame-line', `M${x(i * 8)} ${bottom}v3`);
        out += `<text class="dates" x="${x(i * 8)}" y="255">${d}</text>`;
    });
    out += `<text x="${c.left + 3}" y="16">${c.title}</text>`;

    if (c.order) {
        out += `<text x="7" y="173">#3 buy</text>`;
        out += `<circle cx="${x(49)}" cy="${px(c.order)}" r="4" fill="none" stroke="#f00"/>`;
        out += `<text x="${x(49) + 4}" y="190" fill="#f00000">Buy</text>`;
    }
    document.getElementById(id).innerHTML = out;
}

drawChart('usdcad', usdcad);
drawChart('eurusd', eurusd);
```
